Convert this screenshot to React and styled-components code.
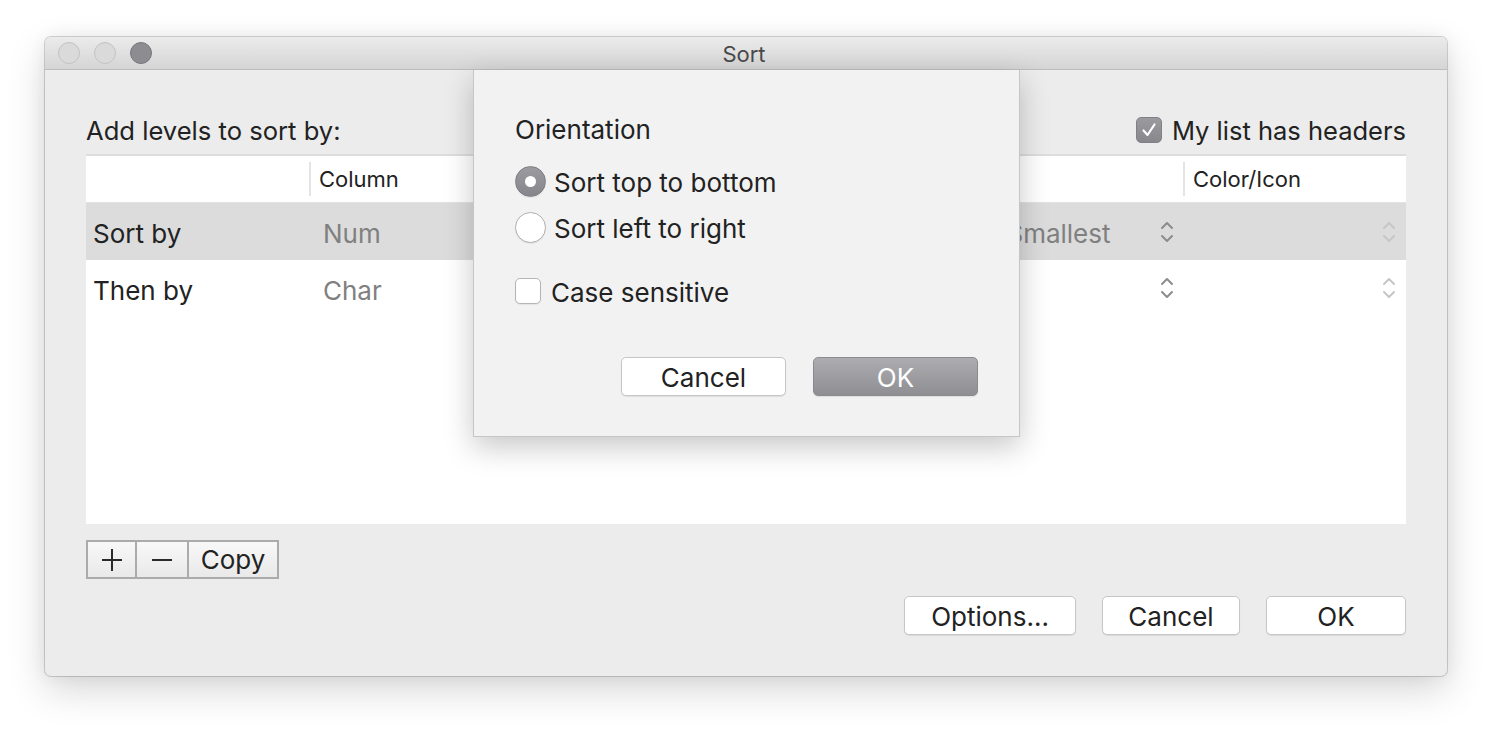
import React from "react";
import styled, { createGlobalStyle } from "styled-components";

const GlobalStyle = createGlobalStyle`
  html, body { margin: 0; padding: 0; background: #ffffff; }
  body { font-family: Inter, "Noto Sans", "Liberation Sans", sans-serif; color: #222; }
  * { box-sizing: border-box; }
`;

const Page = styled.div`
  padding: 37px 0 0 45px;
  width: 1492px;
  height: 730px;
  overflow: hidden;
`;

const Window = styled.div`
  position: relative;
  width: 1402px;
  height: 639px;
  border-radius: 6px;
  background: #ececec;
  box-shadow: 0 0 0 1px rgba(0, 0, 0, 0.16), 0 14px 38px rgba(0, 0, 0, 0.16), 0 0 18px rgba(0,0,0,0.06);
  display: flex;
  flex-direction: column;
`;

const TitleBar = styled.div`
  height: 33px;
  flex: none;
  display: grid;
  grid-template-columns: 1fr auto 1fr;
  align-items: center;
  border-radius: 6px 6px 0 0;
  background: linear-gradient(#ebebeb, #d5d5d5);
  border-bottom: 1px solid #bdbdbd;
`;

const Lights = styled.div`
  display: flex;
  gap: 14px;
  padding-left: 13px;
`;

const Light = styled.span`
  width: 22px;
  height: 22px;
  border-radius: 50%;
  background: ${(p) => (p.$active ? "#8d8c91" : "#dadada")};
  border: 1px solid ${(p) => (p.$active ? "#77767b" : "#c3c3c3")};
`;

const Title = styled.div`
  font-size: 22px;
  color: #4a4a4a;
  margin-left: -4px;
  padding-top: 2px;
`;

const Body = styled.div`
  flex: 1;
  display: flex;
  flex-direction: column;
  padding: 42px 41px 41px 41px;
`;

const HeaderRow = styled.div`
  height: 36px;
  margin-bottom: 6px;
  display: flex;
  align-items: center;
  justify-content: space-between;
`;

const Label = styled.div`
  font-size: 25.6px;
  color: #222;
`;

const CheckLabel = styled.label`
  display: flex;
  align-items: center;
  gap: 10px;
  font-size: 25.5px;
  color: #222;
`;

const Box = styled.span`
  width: 26px;
  height: 26px;
  flex: none;
  border-radius: 5px;
  display: flex;
  align-items: center;
  justify-content: center;
  background: ${(p) => (p.$checked ? "linear-gradient(#9a9a9f, #88878c)" : "#ffffff")};
  border: 1px solid ${(p) => (p.$checked ? "#818086" : "#b5b5b5")};
  box-shadow: ${(p) => (p.$checked ? "none" : "0 1px 1px rgba(0,0,0,0.06)")};
`;

const Table = styled.div`
  height: 370px;
  flex: none;
  background: #fff;
  border-top: 2px solid #dddddd;
  display: flex;
  flex-direction: column;
`;

const COLS = "223px 291px 262px 321px 223px";

const HeadRow = styled.div`
  height: 47px;
  display: grid;
  grid-template-columns: ${COLS};
  border-bottom: 1px solid #e2e2e2;
`;

const HeadCell = styled.div`
  display: flex;
  align-items: center;
  font-size: 22px;
  color: #222;
`;

const Sep = styled.span`
  width: 2px;
  height: 34px;
  background: #e4e4e4;
  margin-right: 8px;
`;

const Row = styled.div`
  height: ${(p) => p.$h}px;
  display: grid;
  grid-template-columns: ${COLS};
  background: ${(p) => (p.$sel ? "#dcdcdc" : "#ffffff")};
  font-size: 26px;
`;

const RowLabel = styled.div`
  display: flex;
  align-items: center;
  padding: 4px 0 0 7px;
  color: #222;
`;

const PopCell = styled.div`
  display: flex;
  align-items: center;
  justify-content: space-between;
  padding-left: 14px;
  padding-right: ${(p) => p.$pr || 9}px;
  color: #808080;
  white-space: nowrap;
`;

const CellText = styled.span`
  padding-top: 4px;
`;

const Chevrons = ({ light }) => (
  <svg width="14" height="26" viewBox="0 0 14 26" fill="none">
    <polyline points="2,9 7,4 12,9" stroke={light ? "#c6c6c6" : "#8c8c8c"} strokeWidth="2" strokeLinecap="round" strokeLinejoin="round" />
    <polyline points="2,17 7,22 12,17" stroke={light ? "#c6c6c6" : "#8c8c8c"} strokeWidth="2" strokeLinecap="round" strokeLinejoin="round" />
  </svg>
);

const Segmented = styled.div`
  margin-top: 16px;
  height: 39px;
  display: flex;
  align-self: flex-start;
  border: 2px solid #ababab;
  background: linear-gradient(#f8f8f8, #e9e9e9);
`;

const Seg = styled.div`
  width: ${(p) => p.$w}px;
  display: flex;
  align-items: center;
  justify-content: center;
  font-size: 26px;
  color: #222;
  border-left: ${(p) => (p.$first ? "none" : "2px solid #ababab")};
`;

const Buttons = styled.div`
  margin-top: ${(p) => p.$mt}px;
  display: flex;
  justify-content: flex-end;
  gap: ${(p) => p.$gap}px;
`;

const Button = styled.div`
  width: ${(p) => p.$w}px;
  height: 39px;
  border-radius: 5px;
  display: flex;
  align-items: center;
  justify-content: center;
  padding-top: 1px;
  font-size: 26px;
  color: ${(p) => (p.$primary ? "#ffffff" : "#222")};
  background: ${(p) => (p.$primary ? "linear-gradient(#acacb1, #8e8e93)" : "#ffffff")};
  border: 1px solid ${(p) => (p.$primary ? "#8a8a8f" : "#c6c6c6")};
  box-shadow: 0 1px 1px rgba(0, 0, 0, 0.08);
`;

const Sheet = styled.div`
  position: absolute;
  left: 428px;
  top: 33px;
  width: 547px;
  height: 367px;
  background: #f2f2f2;
  border: 1px solid #c6c6c6;
  border-top: none;
  box-shadow: 0 10px 28px rgba(0, 0, 0, 0.22);
  padding: 44px 41px 41px 41px;
  display: flex;
  flex-direction: column;
`;

const SheetLabel = styled.div`
  height: 30px;
  display: flex;
  align-items: center;
  font-size: 26px;
  color: #222;
`;

const OptionRow = styled.div`
  height: 30px;
  margin-top: ${(p) => p.$mt}px;
  display: flex;
  align-items: center;
  gap: ${(p) => p.$gap}px;
  font-size: 26px;
  color: #222;
`;

const OptionText = styled.span`
  padding-top: 3px;
`;

const Radio = styled.span`
  width: 31px;
  height: 31px;
  flex: none;
  border-radius: 50%;
  display: flex;
  align-items: center;
  justify-content: center;
  background: ${(p) => (p.$on ? "linear-gradient(#9b9ba0, #86858b)" : "#ffffff")};
  border: 1px solid ${(p) => (p.$on ? "#7f7e84" : "#b0b0b0")};
  box-shadow: 0 1px 1px rgba(0, 0, 0, 0.06);
  &::after {
    content: "";
    display: ${(p) => (p.$on ? "block" : "none")};
    width: 11px;
    height: 11px;
    border-radius: 50%;
    background: #fff;
  }
`;

const PlusIcon = () => (
  <svg width="22" height="24" viewBox="0 0 22 24" fill="none">
    <line x1="1" y1="12" x2="21" y2="12" stroke="#2a2a2a" strokeWidth="2" />
    <line x1="11" y1="1" x2="11" y2="23" stroke="#2a2a2a" strokeWidth="2" />
  </svg>
);

const MinusIcon = () => (
  <svg width="22" height="24" viewBox="0 0 22 24" fill="none">
    <line x1="1" y1="12" x2="21" y2="12" stroke="#2a2a2a" strokeWidth="2" />
  </svg>
);

export default function App() {
  return (
    <>
      <GlobalStyle />
      <Page>
        <Window>
          <TitleBar>
            <Lights>
              <Light />
              <Light />
              <Light $active />
            </Lights>
            <Title>Sort</Title>
            <div />
          </TitleBar>
          <Body>
            <HeaderRow>
              <Label>Add levels to sort by:</Label>
              <CheckLabel>
                <Box $checked>
                  <svg width="18" height="18" viewBox="0 0 18 18" fill="none">
                    <polyline points="3.5,9.5 7.5,14 14.5,3.5" stroke="#fff" strokeWidth="2.2" strokeLinecap="round" strokeLinejoin="round" />
                  </svg>
                </Box>
                My list has headers
              </CheckLabel>
            </HeaderRow>
            <Table>
              <HeadRow>
                <HeadCell />
                <HeadCell><Sep />Column</HeadCell>
                <HeadCell><Sep /></HeadCell>
                <HeadCell><Sep /></HeadCell>
                <HeadCell><Sep />Color/Icon</HeadCell>
              </HeadRow>
              <Row $sel $h={57}>
                <RowLabel>Sort by</RowLabel>
                <PopCell><CellText>Num</CellText><Chevrons /></PopCell>
                <PopCell><span /><Chevrons /></PopCell>
                <PopCell><CellText>Largest to Smallest</CellText><Chevrons /></PopCell>
                <PopCell $pr={10}><span /><Chevrons light /></PopCell>
              </Row>
              <Row $h={56}>
                <RowLabel>Then by</RowLabel>
                <PopCell><CellText>Char</CellText><Chevrons /></PopCell>
                <PopCell><span /><Chevrons /></PopCell>
                <PopCell><span /><Chevrons /></PopCell>
                <PopCell $pr={10}><span /><Chevrons light /></PopCell>
              </Row>
            </Table>
            <Segmented>
              <Seg $first $w={47}><PlusIcon /></Seg>
              <Seg $w={52}><MinusIcon /></Seg>
              <Seg $w={90}>Copy</Seg>
            </Segmented>
            <Buttons $mt={17} $gap={26}>
              <Button $w={172}>Options...</Button>
              <Button $w={138}>Cancel</Button>
              <Button $w={140}>OK</Button>
            </Buttons>
          </Body>
          <Sheet>
            <SheetLabel>Orientation</SheetLabel>
            <OptionRow $mt={22} $gap={8}>
              <Radio $on />
              <OptionText>Sort top to bottom</OptionText>
            </OptionRow>
            <OptionRow $mt={16} $gap={8}>
              <Radio />
              <OptionText>Sort left to right</OptionText>
            </OptionRow>
            <OptionRow $mt={34} $gap={10}>
              <Box />
              <OptionText>Case sensitive</OptionText>
            </OptionRow>
            <Buttons $mt={51} $gap={27}>
              <Button $w={165}>Cancel</Button>
              <Button $w={165} $primary>OK</Button>
            </Buttons>
          </Sheet>
        </Window>
      </Page>
    </>
  );
}
